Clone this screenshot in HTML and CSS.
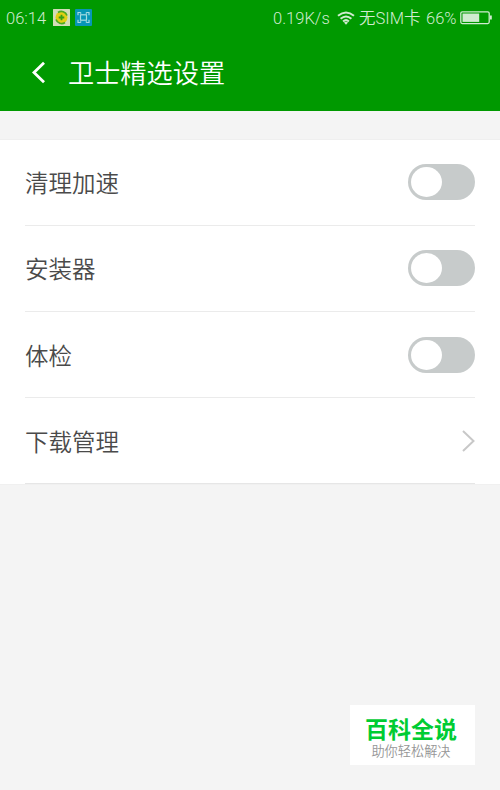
FILE: index.html
```html
<!DOCTYPE html>
<html lang="zh-CN">
<head>
<meta charset="utf-8">
<title>卫士精选设置</title>
<link rel="stylesheet" href="styles.css">
</head>
<body>
<header class="header">
  <div class="status">
    <span class="time">06:14</span>
    <svg class="app-icon" width="17" height="17" viewBox="0 0 17 17"><rect width="17" height="17" rx=".5" fill="#d3ddb8"/><circle cx="8.5" cy="8.5" r="6" fill="#e2cf13"/><path d="M5 3.5A6 6 0 0 1 14 6.5M12 13.5A6 6 0 0 1 3 10.5" fill="none" stroke="#4cab22" stroke-width="1.7"/><path d="M8.5 5.7v5.6M5.7 8.5h5.6" stroke="#369e16" stroke-width="1.8"/></svg>
    <svg class="app-icon" width="17" height="17" viewBox="0 0 17 17"><rect width="17" height="17" rx="1" fill="#0796b6"/><g fill="none" stroke="#a5dce1" stroke-width="1.2"><rect x="5.5" y="5.8" width="6" height="5.4"/><path d="M3 6.2V3.5h2.2l1 1M14 6.2V3.5h-2.2l-1 1M3 10.8v2.7h2.2l1-1M14 10.8v2.7h-2.2l-1-1"/></g></svg>
    <span class="speed">0.19K/s</span>
    <svg class="wifi" width="18" height="14" viewBox="0 0 18 14"><g fill="none" stroke="#d0ebd0" stroke-width="2"><path d="M1 4.8Q9-1.8 17 4.8M3.6 7.8Q9 3.1 14.4 7.8M6.1 10.5Q9 7.8 11.9 10.5"/></g><path d="M7 11.6Q9 10 11 11.6L9 13.8Z" fill="#d0ebd0"/></svg>
    <span class="carrier">无SIM卡</span>
    <span class="percent">66%</span>
    <svg class="battery" width="33" height="14" viewBox="0 0 33 14"><rect x=".8" y=".8" width="28.4" height="11.8" rx="1.5" fill="none" stroke="#d0ebd0" stroke-width="1.3"/><path d="M2.5 2.5h16.7v8.4H2.5z" fill="#d0ebd0"/><path d="M30 4.6h1.8v4H30z" fill="#d0ebd0"/></svg>
  </div>
  <div class="title-bar">
    <svg class="back" width="16" height="24" viewBox="0 0 16 24"><path d="M14 1.7 4 11.5l10 9.8" fill="none" stroke="#fff" stroke-width="2.8"/></svg>
    <h1 class="title">卫士精选设置</h1>
  </div>
</header>
<main class="list">
  <div class="row"><span>清理加速</span><span class="switch"></span></div>
  <div class="row"><span>安装器</span><span class="switch"></span></div>
  <div class="row"><span>体检</span><span class="switch"></span></div>
  <div class="row"><span>下载管理</span><svg width="14" height="24" viewBox="0 0 14 24"><path d="M2 2 12.5 12 2 22" fill="none" stroke="#c8c8c8" stroke-width="2"/></svg></div>
</main>
<aside class="brand">
  <div class="brand-name">百科全说</div>
  <div class="brand-sub">助你轻松解决</div>
</aside>
</body>
</html>
```
FILE: styles.css
```css
* { box-sizing: border-box; }
body {
  margin: 0;
  height: 790px;
  display: flex;
  flex-direction: column;
  overflow: hidden;
  background: #f4f4f4;
  color: #4a4a4a;
  font-family: Roboto, "Noto Sans CJK SC", sans-serif;
  font-weight: 350;
}
.header {
  height: 111px;
  background: #009900;
  color: #fff;
}
.status {
  height: 36px;
  display: flex;
  align-items: center;
  padding: 0 7px 0 6px;
  color: #d0ebd0;
  font-size: 16.5px;
  line-height: 34px;
  white-space: nowrap;
}
.status span { padding-top: 2px; }
.status svg { flex: none; }
.time { width: 47px; }
.app-icon { margin: 0 5px 2px 0; }
.speed { margin-left: auto; width: 64px; }
.carrier { width: 67px; margin-left: 4px; }
.percent { width: 33px; }
.battery { margin-left: 1px; }
.title-bar {
  height: 73px;
  display: flex;
  align-items: center;
  padding-left: 30px;
}
.title {
  margin: 2px 0 0 22px;
  font-size: 26.2px;
  line-height: 38px;
  font-weight: 350;
}
.list {
  height: 346px;
  margin-top: 28px;
  padding: 0 25px;
  background: #fff;
  border-top: 1px solid #efefef;
  border-bottom: 1px solid #f0f0f0;
}
.row {
  height: 86px;
  padding-bottom: 1px;
  display: flex;
  align-items: center;
  justify-content: space-between;
  border-bottom: 1px solid #ebebeb;
  font-size: 23.5px;
}
.row:nth-child(n+3) { padding-bottom: 0; }
.row:last-child { border-color: #e6e6e6; }
.switch {
  width: 67px;
  height: 36px;
  padding: 3px;
  border-radius: 18px;
  background: #c7cbcb;
}
.switch::before {
  content: "";
  display: block;
  width: 31px;
  height: 30px;
  border-radius: 50%;
  background: #fff;
}
.brand {
  width: 125px;
  height: 60px;
  margin: auto 25px 25px auto;
  padding: 11px 3px 0 0;
  background: #fff;
  text-align: center;
}
.brand-name {
  color: #00cc33;
  font-size: 23px;
  line-height: 30px;
  font-weight: 700;
}
.brand-sub {
  color: #969696;
  font-size: 13.2px;
  line-height: 11px;
}
```
